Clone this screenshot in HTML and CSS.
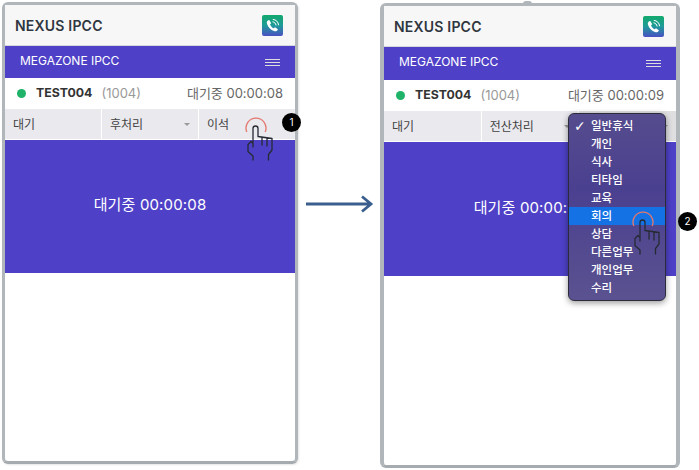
FILE: index.html
```html
<!DOCTYPE html>
<html lang="ko">
<head>
  <meta charset="UTF-8" />
  <title>NEXUS IPCC</title>
  <link rel="stylesheet" href="styles.css">
</head>
<body>
  <svg class="defs" width="0" height="0">
    <defs>
      <linearGradient id="callGrad" x1="0" y1="0" x2="0" y2="1">
        <stop offset="0" stop-color="#12a96b" />
        <stop offset="0.5" stop-color="#1f9a9a" />
        <stop offset="1" stop-color="#4a50c4" />
      </linearGradient>
      <symbol id="callIcon" viewBox="0 0 21 21">
        <rect width="21" height="21" rx="2" fill="url(#callGrad)" />
        <path d="M6.2 5.2c-1.3 .8-1.7 2-1.2 3.6 1.1 3.4 3.7 6.2 7 7.3 1.6 .5 2.9 0 3.6-1.2l.3-.7-2.9-2-1.3 1.1c-1.600-.8-2.9-2.2-3.7-3.9l1.2-1.2-1.9-3.1z" fill="#fff" />
        <path d="M10.5 6.8c1.9 .2 3.3 1.6 3.6 3.6M10.8 4.4c3.2 .2 5.5 2.5 5.800 5.800" fill="none" stroke="#fff" stroke-width="1" />
      </symbol>
      <symbol id="handIcon" viewBox="0 0 32 46">
        <path d="M2.800 16A10 10 0 1 1 21.200 16" fill="none" stroke="#e4786e" stroke-width="1.300" />
        <path d="M9 44V40L4 35.500V28.500L7 25.500L9 27.500M9 31V12.500a2.500 2.500 0 0 1 5 0V20.500L28 22.500V34L24.500 38.500V44M18 21.200V29M23 22V30" fill="none" stroke="#262a33" stroke-width="1.300" stroke-linecap="round" stroke-linejoin="round" />
      </symbol>
    </defs>
  </svg>

  <div class="stage">
    <section class="phone phone-first">
      <header class="app-head">
        <div class="app-title">NEXUS IPCC</div>
        <svg class="call-icon"><use href="#callIcon" /></svg>
      </header>
      <div class="brand-bar">
        <span class="brand-name">MEGAZONE IPCC</span>
        <div class="burger"><div></div><div></div><div></div></div>
      </div>
      <div class="status-row">
        <span class="dot"></span>
        <span class="user">TEST004</span>
        <span class="ext">(1004)</span>
        <span class="timer">대기중 00:00:08</span>
      </div>
      <div class="tabs">
        <div class="tab">대기</div>
        <div class="tab tab-caret">후처리</div>
        <div class="tab">이석</div>
      </div>
      <div class="panel">대기중 00:00:08</div>
      <svg class="hand hand-first"><use href="#handIcon" /></svg>
      <div class="badge badge-first">1</div>
    </section>

    <svg class="arrow" width="68" height="20" viewBox="0 0 68 20">
      <path d="M0 10h65M56 2.500l9 7.500-9 7.500" fill="none" stroke="#3a5f8e" stroke-width="2.800" />
    </svg>

    <section class="phone phone-second">
      <header class="app-head">
        <div class="app-title">NEXUS IPCC</div>
        <svg class="call-icon"><use href="#callIcon" /></svg>
      </header>
      <div class="brand-bar">
        <span class="brand-name">MEGAZONE IPCC</span>
        <div class="burger"><div></div><div></div><div></div></div>
      </div>
      <div class="status-row">
        <span class="dot"></span>
        <span class="user">TEST004</span>
        <span class="ext">(1004)</span>
        <span class="timer">대기중 00:00:09</span>
      </div>
      <div class="tabs">
        <div class="tab">대기</div>
        <div class="tab tab-caret">전산처리</div>
        <div class="tab tab-caret tab-open"></div>
      </div>
      <div class="panel">대기중 00:00:09</div>
      <ul class="menu">
        <li class="checked">일반휴식</li>
        <li>개인</li>
        <li>식사</li>
        <li>티타임</li>
        <li>교육</li>
        <li class="active">회의</li>
        <li>상담</li>
        <li>다른업무</li>
        <li>개인업무</li>
        <li>수리</li>
      </ul>
      <svg class="hand hand-second"><use href="#handIcon" /></svg>
      <div class="badge badge-second">2</div>
    </section>
  </div>
</body>
</html>
```

FILE: styles.css
```css
body {
  margin: 0;
  background: #fff;
  font-family: Inter, "Noto Sans CJK KR", sans-serif;
  color: #444;
  overflow: hidden;
}

.defs { position: absolute; }

.stage {
  display: flex;
  align-items: flex-start;
  width: 699px;
  height: 470px;
}

.phone {
  position: relative;
  display: flex;
  flex-direction: column;
  box-sizing: border-box;
  background: #fff;
  border: 3px solid #b1b6ba;
  border-bottom-color: #a6abaf;
  border-radius: 6px;
  flex: none;
}

.phone-first {
  width: 296px;
  height: 462px;
  margin: 2px 0 0 2px;
  box-shadow: 1px 1px 2px rgba(0,0,0,0.1);
}

.phone-second {
  width: 300px;
  height: 465px;
  margin: 3px 0 0 6px;
  border-width: 3px 4px;
}

/* little nub on the top edge of the second window */
.phone-second::before {
  content: '';
  position: absolute;
  top: -5px;
  left: 139px;
  width: 9px;
  height: 3px;
  background: #b1b6ba;
  border-radius: 3px 3px 0 0;
}

.app-head {
  display: flex;
  justify-content: space-between;
  align-items: center;
  height: 40px;
  padding: 0 12px 0 10px;
  background: #f7f7f7;
  border-bottom: 1px solid #d5d8da;
}

.app-title {
  font-size: 14px;
  font-weight: 600;
  letter-spacing: 0.2px;
  color: #2f3640;
}

.call-icon { width: 21px; height: 21px; }

.brand-bar {
  display: flex;
  justify-content: space-between;
  align-items: center;
  height: 32px;
  padding: 0 15px;
  background: #4f41c7;
  color: #fff;
  font-size: 12px;
}

.brand-name { margin-bottom: 4px; }

.phone-second .brand-bar { height: 33px; }

.burger { width: 15px; }
.burger div { height: 1px; background: #ddd; margin: 2px 0; }

.status-row {
  display: flex;
  align-items: center;
  box-sizing: border-box;
  height: 31px;
  padding: 0 12px 2px;
}

.dot {
  width: 9px;
  height: 9px;
  margin: 2px 10px 0 0;
  background: #1fb36a;
  border-radius: 50%;
}

.user {
  margin-right: 9px;
  font-size: 12.300px;
  font-weight: 700;
  color: #333;
}

.ext { font-size: 13px; color: #999; }
.timer { margin-left: auto; font-size: 13px; color: #666; }

.tabs {
  display: grid;
  grid-template-columns: repeat(3, 1fr);
  gap: 1px;
  height: 30px;
}

.tab {
  position: relative;
  display: flex;
  align-items: center;
  padding: 0 0 2px 8px;
  background: #e9e9ee;
  font-size: 12px;
  color: #444;
}

.tab-open { background: #dfdfe2; }

.tab-caret::after {
  content: '';
  position: absolute;
  top: 14px;
  right: 8px;
  border: 3px solid transparent;
  border-top: 3px solid #999;
  border-bottom: none;
}

.panel {
  display: flex;
  justify-content: center;
  align-items: center;
  box-sizing: border-box;
  height: 133px;
  padding-bottom: 6px;
  margin-top: 1px;
  background: #4f41c7;
  color: #fff;
  font-size: 15px;
  letter-spacing: 0.15px;
}

.phone-second .panel { height: 134px; }

.menu {
  position: absolute;
  top: 107px;
  left: 184px;
  box-sizing: border-box;
  width: 98px;
  height: 188px;
  margin: 0;
  padding: 3px 0;
  list-style: none;
  background: linear-gradient(#554c8e, #4a4090 40%, #5a5290);
  border: 1px solid #2b2b3c;
  border-radius: 6px;
  box-shadow: 0 2px 6px rgba(0,0,0,0.4);
  color: #fff;
  font-size: 11.500px;
  font-weight: 500;
}

.menu li {
  position: relative;
  height: 18px;
  line-height: 18px;
  padding-left: 22px;
}

.menu li.checked::before {
  content: '✓';
  position: absolute;
  left: 5px;
  font-family: "DejaVu Sans", sans-serif;
  font-size: 14px;
}

.menu li.active { background: #1472e4; }

.hand {
  position: absolute;
  width: 32px;
  height: 46px;
}

.hand-first { top: 111px; left: 239px; }
.hand-second { top: 204px; left: 247px; }

.badge {
  position: absolute;
  width: 19px;
  height: 19px;
  line-height: 19px;
  background: #000;
  border-radius: 50%;
  color: #fff;
  font-size: 10px;
  text-align: center;
}

.badge-first { top: 108px; left: 277px; }
.badge-second { top: 206px; left: 294px; }

.arrow {
  flex: none;
  margin: 194px 0 0 8px;
}
```
